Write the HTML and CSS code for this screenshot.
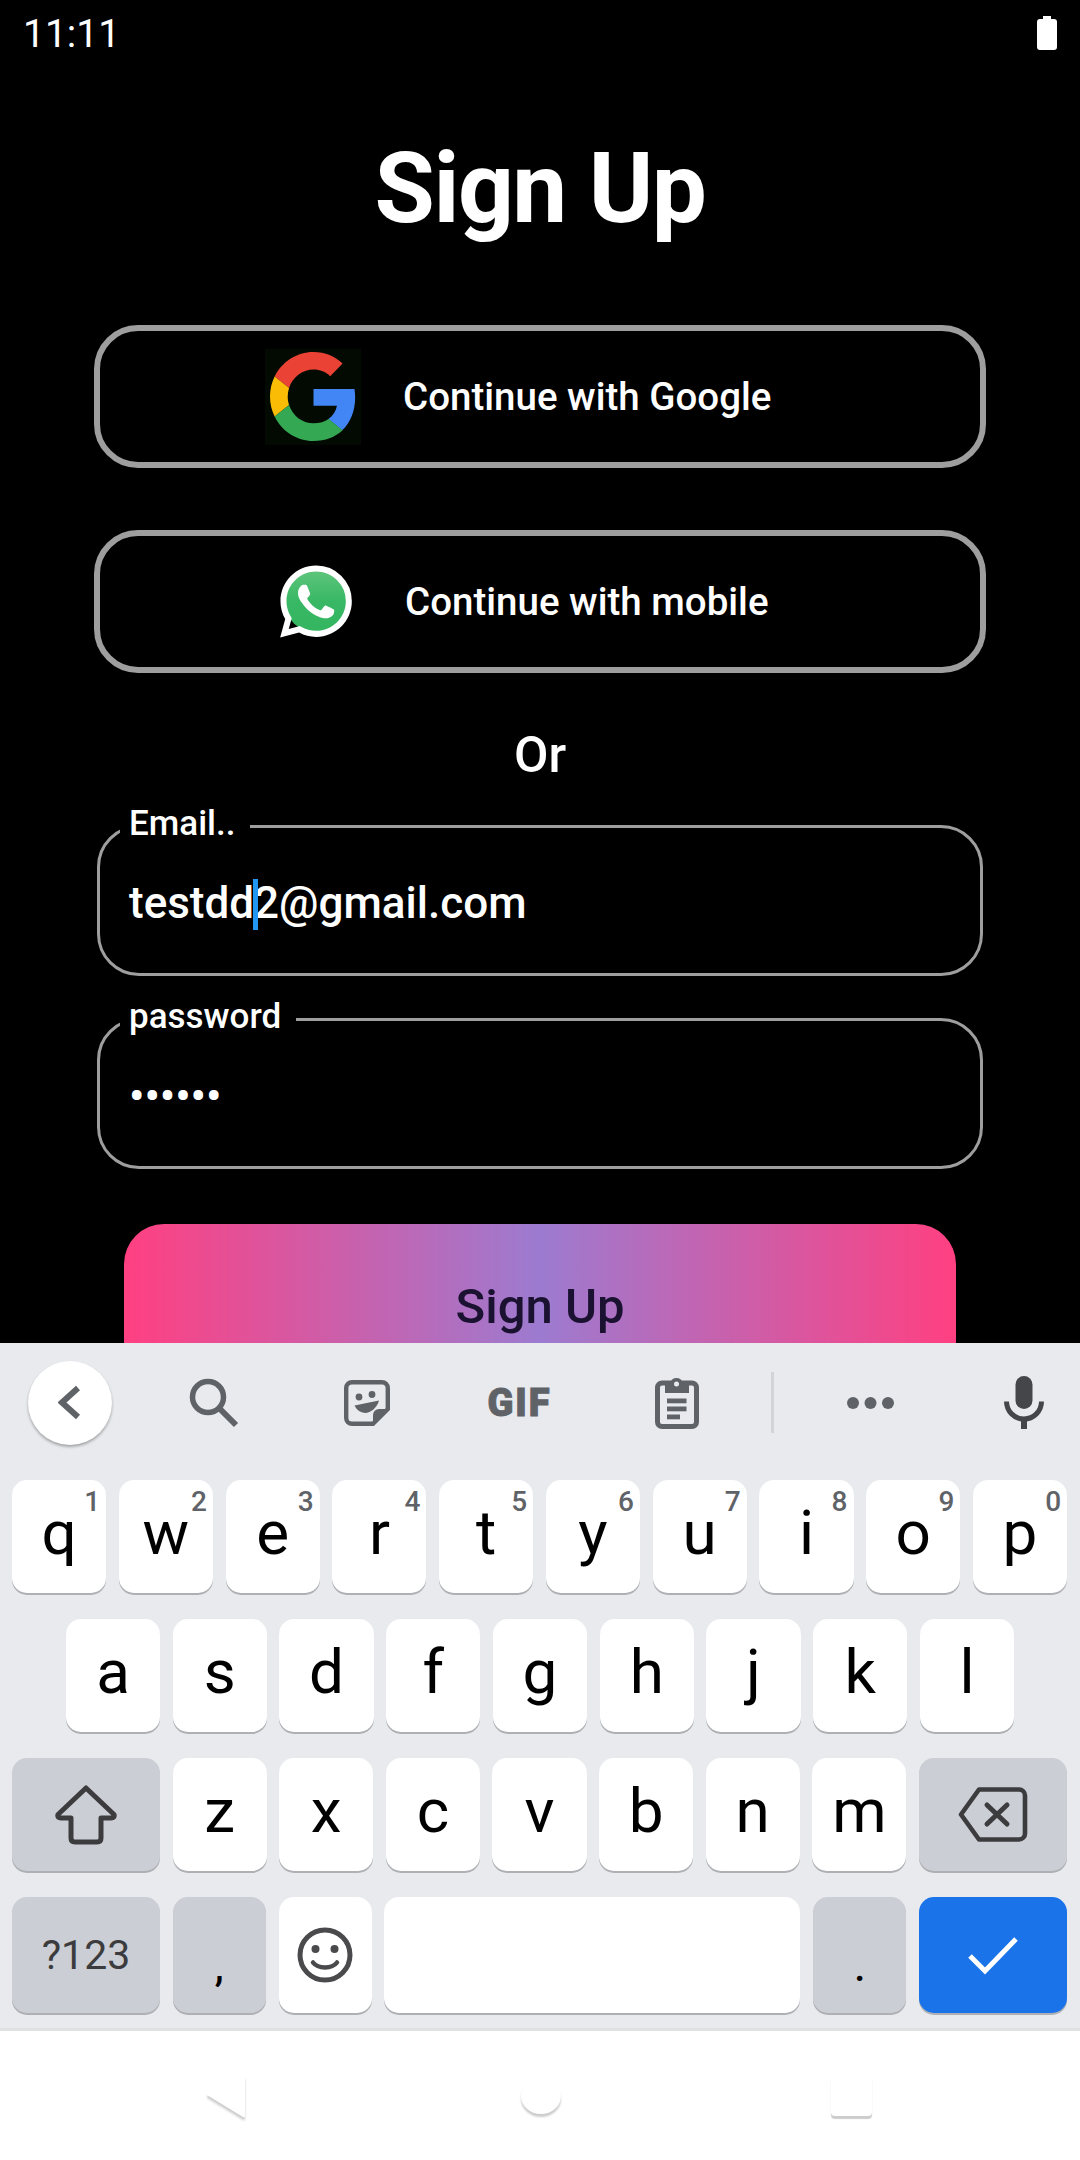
FILE: index.html
```html
<!DOCTYPE html>
<html lang="en">

<head>
    <meta charset="UTF-8">
    <meta name="viewport" content="width=device-width, initial-scale=1.0">
    <title>Sign Up</title>
    <link rel="stylesheet" href="styles.css">
</head>

<body>
    <div class="screen">
        <div class="app">
            <div class="status-bar">
                <span class="time">11:11</span>
                <svg class="battery" width="20" height="34" viewBox="0 0 20 34">
                    <path d="M6 0h8v3h3a3 3 0 0 1 3 3v25a3 3 0 0 1-3 3H3a3 3 0 0 1-3-3V6a3 3 0 0 1 3-3h3z" fill="#fff" />
                </svg>
            </div>

            <h1 class="title">Sign Up</h1>

            <div class="form">
                <button type="button" class="social-btn google-btn">
                    <span class="google-icon">
                        <svg width="87" height="89" viewBox="0 0 48 48" preserveAspectRatio="none">
                            <path fill="#EA4335" d="M24 9.5c3.54 0 6.71 1.22 9.21 3.6l6.85-6.85C35.9 2.38 30.47 0 24 0 14.62 0 6.51 5.38 2.56 13.22l7.98 6.19C12.43 13.72 17.74 9.5 24 9.5z" />
                            <path fill="#4285F4" d="M46.98 24.55c0-1.57-.15-3.09-.38-4.55H24v9.02h12.94c-.58 2.96-2.26 5.48-4.78 7.18l7.73 6c4.51-4.18 7.09-10.36 7.09-17.65z" />
                            <path fill="#FBBC05" d="M10.53 28.59c-.48-1.45-.76-2.99-.76-4.59s.27-3.14.76-4.59l-7.98-6.19C.92 16.46 0 20.12 0 24c0 3.88.92 7.54 2.56 10.78l7.97-6.19z" />
                            <path fill="#34A853" d="M24 48c6.48 0 11.93-2.13 16.06-5.81l-7.73-6c-2.15 1.45-4.92 2.3-8.33 2.3-6.26 0-11.57-4.22-13.47-9.91l-7.98 6.19C6.51 42.62 14.62 48 24 48z" />
                        </svg>
                    </span>
                    Continue with Google
                </button>

                <button type="button" class="social-btn mobile-btn">
                    <svg width="72" height="73" viewBox="0 0 24 24">
                        <defs>
                            <linearGradient id="waGreen" x1="0" y1="0" x2="0" y2="1">
                                <stop offset="0" stop-color="#5fc57c" />
                                <stop offset="0.5" stop-color="#38b864" />
                                <stop offset="1" stop-color="#34b560" />
                            </linearGradient>
                        </defs>
                        <circle cx="12" cy="12" r="10.4" fill="url(#waGreen)" />
                        <path fill="#fff" d="M17.472 14.382c-.297-.149-1.758-.867-2.03-.967-.273-.099-.471-.148-.67.15-.197.297-.767.966-.94 1.164-.173.199-.347.223-.644.075-.297-.15-1.255-.463-2.39-1.475-.883-.788-1.48-1.761-1.653-2.059-.173-.297-.018-.458.13-.606.134-.133.298-.347.446-.52.149-.174.198-.298.298-.497.099-.198.05-.371-.025-.52-.075-.149-.669-1.612-.916-2.207-.242-.579-.487-.5-.669-.51-.173-.008-.371-.01-.57-.01-.198 0-.52.074-.792.372-.272.297-1.04 1.016-1.04 2.479 0 1.462 1.065 2.875 1.213 3.074.149.198 2.096 3.2 5.077 4.487.709.306 1.262.489 1.694.625.712.227 1.36.195 1.871.118.571-.085 1.758-.719 2.006-1.413.248-.694.248-1.289.173-1.413-.074-.124-.272-.198-.57-.347m-5.421 7.403h-.004a9.87 9.87 0 01-5.031-1.378l-.361-.214-3.741.982.998-3.648-.235-.374a9.86 9.86 0 01-1.51-5.26c.001-5.45 4.436-9.884 9.888-9.884 2.64 0 5.122 1.03 6.988 2.898a9.825 9.825 0 012.893 6.994c-.003 5.45-4.437 9.884-9.885 9.884m8.413-18.297A11.815 11.815 0 0012.05 0C5.495 0 .16 5.335.157 11.892c0 2.096.547 4.142 1.588 5.945L.057 24l6.305-1.654a11.882 11.882 0 005.683 1.448h.005c6.554 0 11.89-5.335 11.893-11.893a11.821 11.821 0 00-3.48-8.413z" />
                    </svg>
                    Continue with mobile
                </button>

                <div class="or">Or</div>

                <fieldset class="field">
                    <legend>Email..</legend>
                    <div class="value">testdd<span class="caret"></span>2@gmail.com</div>
                </fieldset>

                <fieldset class="field">
                    <legend>password</legend>
                    <div class="value">••••••</div>
                </fieldset>

                <button type="button" class="submit-btn">Sign Up</button>
            </div>
        </div>

        <div class="keyboard">
            <div class="toolbar">
                <div class="tool tool-back">
                    <span class="back-circle">
                        <svg width="24" height="36" viewBox="0 0 24 36">
                            <path d="M20 3L4 17.500L20 32" fill="none" stroke="#5f6368" stroke-width="6" />
                        </svg>
                    </span>
                </div>
                <div class="tool">
                    <svg width="54" height="52" viewBox="0 0 54 52">
                        <circle cx="21" cy="20" r="15.500" fill="none" stroke="#5f6368" stroke-width="5.500" />
                        <path d="M32 31L49 48" stroke="#5f6368" stroke-width="6" />
                    </svg>
                </div>
                <div class="tool">
                    <svg width="46" height="46" viewBox="0 0 46 46">
                        <path d="M8 2.200H38a5.800 5.800 0 0 1 5.800 5.800V29L29 43.800H8A5.800 5.800 0 0 1 2.200 38V8A5.800 5.800 0 0 1 8 2.200z" fill="none" stroke="#5f6368" stroke-width="4.400" />
                        <path d="M44 29H35a6 6 0 0 0-6 6v9z" fill="#5f6368" />
                        <circle cx="15" cy="17" r="3.400" fill="#5f6368" />
                        <circle cx="28" cy="14.500" r="3.400" fill="#5f6368" />
                        <path d="M10.500 25.500L35 20.500C33 28 27 32.500 21 33C16 32.500 12.500 30 10.500 25.500z" fill="#5f6368" />
                    </svg>
                </div>
                <div class="tool gif">GIF</div>
                <div class="tool tool-clip">
                    <svg width="44" height="52" viewBox="0 0 44 52">
                        <rect x="2.500" y="6" width="39" height="43.500" rx="4.500" fill="none" stroke="#5f6368" stroke-width="5" />
                        <path d="M10 5H15.500a6.500 6.500 0 0 1 12 0H34V16H10z" fill="#5f6368" />
                        <circle cx="21.500" cy="7" r="2.500" fill="#e8eaed" />
                        <rect x="12" y="21.500" width="19.500" height="4.800" fill="#5f6368" />
                        <rect x="12" y="29.500" width="19.500" height="4.800" fill="#5f6368" />
                        <rect x="12" y="37.500" width="13" height="4.800" fill="#5f6368" />
                    </svg>
                </div>
                <div class="tool-divider"></div>
                <div class="tool tool-dots">
                    <svg width="47" height="12" viewBox="0 0 47 12">
                        <circle cx="6" cy="6" r="6" fill="#5f6368" />
                        <circle cx="23.500" cy="6" r="6" fill="#5f6368" />
                        <circle cx="41" cy="6" r="6" fill="#5f6368" />
                    </svg>
                </div>
                <div class="tool tool-mic">
                    <svg width="40" height="53" viewBox="0 0 40 53">
                        <rect x="11.500" y="0" width="17" height="33" rx="8.500" fill="#444649" />
                        <path d="M2.500 25.500a17.500 17.500 0 0 0 35 0" fill="none" stroke="#444649" stroke-width="5" />
                        <rect x="17" y="42" width="6" height="11" fill="#444649" />
                    </svg>
                </div>
            </div>

            <div class="key-row">
                <div class="key">q<span class="hint">1</span></div>
                <div class="key">w<span class="hint">2</span></div>
                <div class="key">e<span class="hint">3</span></div>
                <div class="key">r<span class="hint">4</span></div>
                <div class="key">t<span class="hint">5</span></div>
                <div class="key">y<span class="hint">6</span></div>
                <div class="key">u<span class="hint">7</span></div>
                <div class="key">i<span class="hint">8</span></div>
                <div class="key">o<span class="hint">9</span></div>
                <div class="key">p<span class="hint">0</span></div>
            </div>

            <div class="key-row row-middle">
                <div class="key">a</div>
                <div class="key">s</div>
                <div class="key">d</div>
                <div class="key">f</div>
                <div class="key">g</div>
                <div class="key">h</div>
                <div class="key">j</div>
                <div class="key">k</div>
                <div class="key">l</div>
            </div>

            <div class="key-row">
                <div class="key key-wide key-gray">
                    <svg width="62" height="60" viewBox="0 0 62 60">
                        <path d="M31 3L59 29.500Q60 33 56 33H46V53Q46 57 42 57H20Q16 57 16 53V33H6Q2 33 3 29.500z" fill="none" stroke="#3c3c3e" stroke-width="5" stroke-linejoin="round" />
                    </svg>
                </div>
                <div class="key">z</div>
                <div class="key">x</div>
                <div class="key">c</div>
                <div class="key">v</div>
                <div class="key">b</div>
                <div class="key">n</div>
                <div class="key">m</div>
                <div class="key key-wide key-gray">
                    <svg width="70" height="55" viewBox="0 0 70 55">
                        <path d="M21 2.500H61a6 6 0 0 1 6 6V46.500a6 6 0 0 1-6 6H21L3 27.500z" fill="none" stroke="#3c3c3e" stroke-width="4.600" stroke-linejoin="round" />
                        <path d="M29 18L49 37M49 18L29 37" fill="none" stroke="#3c3c3e" stroke-width="5" stroke-linecap="round" />
                    </svg>
                </div>
            </div>

            <div class="key-row row-bottom">
                <div class="key key-wide key-gray key-symbols">?123</div>
                <div class="key key-gray key-punct">,</div>
                <div class="key">
                    <svg width="56" height="56" viewBox="0 0 56 56">
                        <circle cx="28" cy="28" r="25" fill="none" stroke="#4a4a4c" stroke-width="5" />
                        <circle cx="18.500" cy="22" r="4" fill="#4a4a4c" />
                        <circle cx="37.500" cy="22" r="4" fill="#4a4a4c" />
                        <path d="M16 35.500C21 42 35 42 40 35.500" fill="none" stroke="#4a4a4c" stroke-width="4.500" stroke-linecap="round" />
                    </svg>
                </div>
                <div class="key key-space"></div>
                <div class="key key-gray key-punct">.</div>
                <div class="key key-wide key-enter">
                    <svg width="52" height="40" viewBox="0 0 52 40">
                        <path d="M3 21L18 36L49 4" fill="none" stroke="#fff" stroke-width="5" />
                    </svg>
                </div>
            </div>
        </div>

        <div class="nav-bar">
            <svg class="nav-icon" width="40" height="44" viewBox="0 0 40 44">
                <path d="M39 1V41Q39 43 37 42L1 20V18L37 1z" fill="#fff" />
            </svg>
            <span class="nav-circle"></span>
            <span class="nav-square"></span>
        </div>
    </div>
</body>

</html>
```

FILE: styles.css
```css
* {
    box-sizing: border-box;
}

body {
    margin: 0;
    padding: 0;
    background-color: #fff;
    font-family: 'Roboto', sans-serif;
}

.screen {
    width: 1080px;
    height: 2160px;
    display: flex;
    flex-direction: column;
    overflow: hidden;
}

.app {
    height: 1343px;
    flex: none;
    overflow: hidden;
    background-color: #000;
    color: #fff;
}

.status-bar {
    height: 66px;
    padding: 0 23px;
    display: flex;
    justify-content: space-between;
    align-items: center;
}

.time {
    margin-top: 2px;
    font-size: 39px;
    font-weight: 400;
    line-height: 64px;
}

.title {
    margin: 68px 0 0;
    font-size: 98px;
    font-weight: 700;
    letter-spacing: -1.5px;
    line-height: 110px;
    text-align: center;
}

.form {
    margin-top: 81px;
    padding: 0 94px;
    display: flex;
    flex-direction: column;
}

.social-btn {
    height: 143px;
    display: flex;
    align-items: center;
    background-color: transparent;
    border: 6px solid #9e9e9e;
    border-radius: 44px;
    color: #fff;
    font-family: inherit;
    font-size: 38.5px;
    font-weight: 500;
}

.google-btn {
    padding: 0 0 0 165px;
    gap: 42px;
}

.mobile-btn {
    margin-top: 62px;
    padding: 0 0 0 180px;
    gap: 53px;
}

.google-icon {
    width: 96px;
    height: 96px;
    display: flex;
    align-items: center;
    justify-content: center;
    background-color: #020a02;
}

.or {
    margin-top: 54px;
    font-size: 50px;
    font-weight: 500;
    line-height: 56px;
    text-align: center;
}

.field {
    margin: 21px 3px 0;
    padding: 30px 29px 44px;
    min-width: 0;
    border: 3px solid #9e9e9e;
    border-radius: 42px;
}

.field legend {
    margin-left: -9px;
    padding: 0 15px 4px 9px;
    font-size: 35px;
    font-weight: 500;
    line-height: 40px;
}

.value {
    height: 51px;
    font-size: 44px;
    font-weight: 500;
    line-height: 51px;
}

.caret {
    position: relative;
}

.caret::after {
    content: "";
    position: absolute;
    left: -1px;
    top: 2px;
    width: 5px;
    height: 51px;
    background-color: #2196f3;
}

.submit-btn {
    margin: 55px 30px 0;
    height: 164px;
    flex: none;
    border: none;
    border-radius: 40px;
    background: linear-gradient(90deg, #ff4081, #9c7bd0 50%, #ff4081);
    color: #1a1230;
    font-family: inherit;
    font-size: 49px;
    font-weight: 500;
}

.keyboard {
    height: 688px;
    flex: none;
    background-color: #e8eaed;
    border-bottom: 3px solid #dfe0e2;
}

.toolbar {
    height: 137px;
    padding-bottom: 18px;
    display: flex;
    align-items: center;
}

.tool {
    width: 153px;
    height: 119px;
    flex: none;
    display: flex;
    align-items: center;
    justify-content: center;
}

.tool-back {
    width: 137px;
    justify-content: flex-start;
    padding-left: 28px;
}

.tool-clip {
    margin-left: 4px;
}

.tool-dots {
    margin-left: 20px;
}

.back-circle {
    width: 84px;
    height: 84px;
    display: flex;
    align-items: center;
    justify-content: center;
    border-radius: 50%;
    background-color: #fff;
    box-shadow: 0 2px 3px rgba(0, 0, 0, 0.3);
}

.gif {
    color: #5f6368;
    font-size: 38px;
    font-weight: 900;
    letter-spacing: 2px;
    -webkit-text-stroke: 1px #5f6368;
}

.tool-divider {
    width: 3px;
    height: 61px;
    margin-left: 18px;
    background-color: #d2d4d8;
}

.tool-mic {
    width: 133px;
    justify-content: flex-end;
    padding-right: 36px;
}

.key-row {
    height: 113px;
    margin-bottom: 26px;
    padding: 0 13px 0 12px;
    display: flex;
    gap: 12.6px;
}

.row-middle {
    padding: 0 66px;
}

.row-bottom {
    height: 116px;
    margin-bottom: 0;
}

.key {
    position: relative;
    flex: 1;
    display: flex;
    align-items: center;
    justify-content: center;
    padding-bottom: 8px;
    background-color: #fff;
    border-radius: 15px;
    box-shadow: 0 2px 0 #aeb0b4;
    color: #000;
    font-size: 62px;
    line-height: 1;
}

.key svg {
    margin-top: 8px;
}

.key-wide {
    flex: 0 0 148px;
}

.key-space {
    flex: 0 0 416px;
}

.key-gray {
    background-color: #cbced5;
}

.key-enter {
    background-color: #1a73e8;
}

.key-symbols {
    padding-bottom: 0;
    color: #3c3c3e;
    font-size: 41px;
}

.key-punct {
    padding-bottom: 19px;
    align-items: flex-end;
    font-size: 40px;
    font-weight: 500;
    line-height: 52px;
}

.hint {
    position: absolute;
    top: 8px;
    right: 6px;
    color: #5f6368;
    font-size: 28px;
    font-weight: 500;
    line-height: 27px;
}

.nav-bar {
    flex: 1;
    display: flex;
    align-items: flex-start;
    padding: 44px 0 0 206px;
    background-color: #fff;
}

.nav-icon {
    filter: drop-shadow(0 3px 1px rgba(0, 0, 0, 0.2));
}

.nav-circle {
    width: 40px;
    height: 36px;
    margin: 3px 0 0 275px;
    border-radius: 50%;
    background-color: #fff;
    box-shadow: 0 3px 2px rgba(0, 0, 0, 0.2);
}

.nav-square {
    width: 41px;
    height: 41px;
    margin-left: 270px;
    border-radius: 4px;
    background-color: #fff;
    box-shadow: 0 3px 1px rgba(0, 0, 0, 0.2);
}
```
